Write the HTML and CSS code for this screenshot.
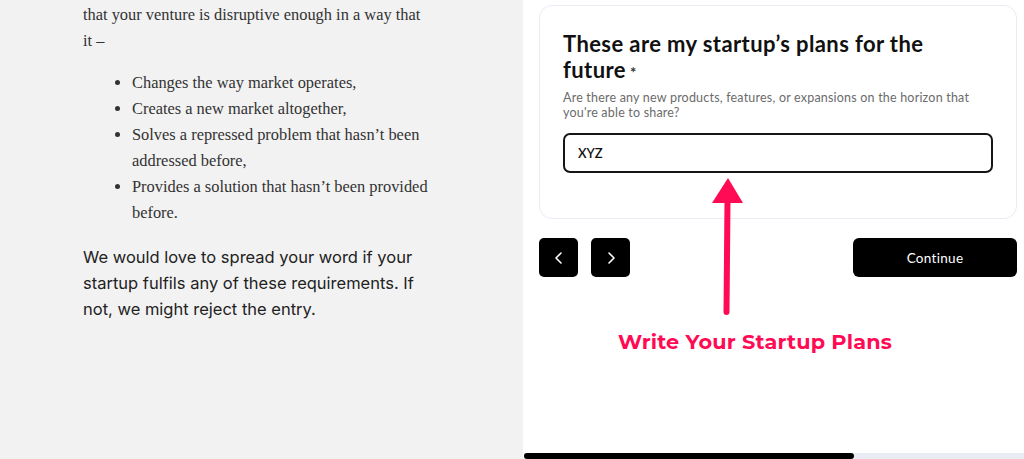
FILE: index.html
```html
<!DOCTYPE html>
<html>
<head>
<meta charset="utf-8">
<link rel="stylesheet" href="styles.css">
</head>
<body>
<div class="page">
  <section class="article">
    <p class="serif">that your venture is disruptive enough in a way that it –</p>
    <ul class="serif list">
      <li>Changes the way market operates,</li>
      <li>Creates a new market altogether,</li>
      <li>Solves a repressed problem that hasn’t been addressed before,</li>
      <li>Provides a solution that hasn’t been provided before.</li>
    </ul>
    <p class="sans">We would love to spread your word if your startup fulfils any of these requirements. If not, we might reject the entry.</p>
  </section>
  <section class="shot">
    <div class="card">
      <h2 class="q-title">These are my startup’s plans for the future<span class="req">*</span></h2>
      <p class="q-help">Are there any new products, features, or expansions on the horizon that you're able to share?</p>
      <div class="q-input">XYZ</div>
    </div>
    <div class="nav">
      <button class="sq"><svg width="12" height="14" viewBox="0 0 12 14"><path d="M8 2 L3 7 L8 12" fill="none" stroke="#fff" stroke-width="1.6" stroke-linecap="round" stroke-linejoin="round"/></svg></button>
      <button class="sq"><svg width="12" height="14" viewBox="0 0 12 14"><path d="M4 2 L9 7 L4 12" fill="none" stroke="#fff" stroke-width="1.6" stroke-linecap="round" stroke-linejoin="round"/></svg></button>
      <button class="continue">Continue</button>
    </div>
    <div class="spacer"></div>
    <div class="scroll"><div class="thumb"></div></div>
    <svg class="arrow" width="40" height="142" viewBox="0 0 40 142">
      <path d="M18.5 136 L19.5 24" stroke="#ff0a54" stroke-width="6" stroke-linecap="round" fill="none"/>
      <path d="M20 2 L35 27 L4 27 Z" fill="#ff0a54"/>
    </svg>
    <div class="note">Write Your Startup Plans</div>
  </section>
</div>
</body>
</html>
```
FILE: styles.css
```css
html, body { margin: 0; padding: 0; }
body { width: 1024px; height: 459px; overflow: hidden; background: #fff; }
.page { display: grid; grid-template-columns: 523px 1fr; height: 459px; }
.article { background: #f2f2f2; padding: 2px 0 0 83px; }
.article p, .article ul { margin: 0; }
.serif { font-family: "Liberation Serif", serif; font-size: 16.4px; line-height: 26px; color: #333; width: 345px; }
.list { padding: 16px 0 0 49px !important; width: 300px !important; }
.list li { padding-left: 0; }
.sans { font-family: Inter, "Noto Sans", sans-serif; font-size: 16.5px; line-height: 26px; color: #222; width: 345px; margin-top: 18px !important; }
.shot { position: relative; display: flex; flex-direction: column; padding: 5px 7px 0 16px; }
.card { border: 1px solid #e9edf3; border-radius: 13px; padding: 25px 23px 45px 23px; }
.q-title { margin: 0; font-family: Lato, sans-serif; font-weight: 700; font-size: 22px; line-height: 26px; color: #111; letter-spacing: 0.4px; width: 400px; }
.req { font-size: 15px; line-height: 0; margin-left: 4px; color: #333; font-weight: 700; }
.q-help { margin: 7px 0 0; font-family: Lato, sans-serif; font-size: 12.5px; line-height: 15px; color: #6b6b6b; letter-spacing: 0.2px; }
.q-input { margin-top: 13px; height: 36px; border: 2px solid #161616; border-radius: 7px; padding: 0 13px; display: flex; align-items: center; font-family: Lato, sans-serif; font-size: 13px; font-weight: 600; color: #111; }
.nav { display: flex; align-items: center; gap: 13px; margin-top: 19px; }
.sq { width: 39px; height: 39px; background: #000; border: none; border-radius: 5px; display: flex; align-items: center; justify-content: center; padding: 0; }
.continue { margin-left: auto; width: 164px; height: 39px; background: #000; border: none; border-radius: 6px; color: #fff; font-family: Lato, sans-serif; font-size: 13.5px; letter-spacing: 0.3px; }
.spacer { flex: 1; }
.scroll { margin-left: -15px; margin-right: -7px; height: 6px; background: #e9ecf2; }
.thumb { width: 330px; height: 6px; background: #000; border-radius: 3px; }
.arrow { position: absolute; left: 185px; top: 176px; }
.note { position: absolute; left: 95px; top: 329px; font-family: Montserrat, "Open Sans", sans-serif; font-weight: 700; font-size: 20.8px; color: #ff0a54; letter-spacing: 0.2px; }
```
